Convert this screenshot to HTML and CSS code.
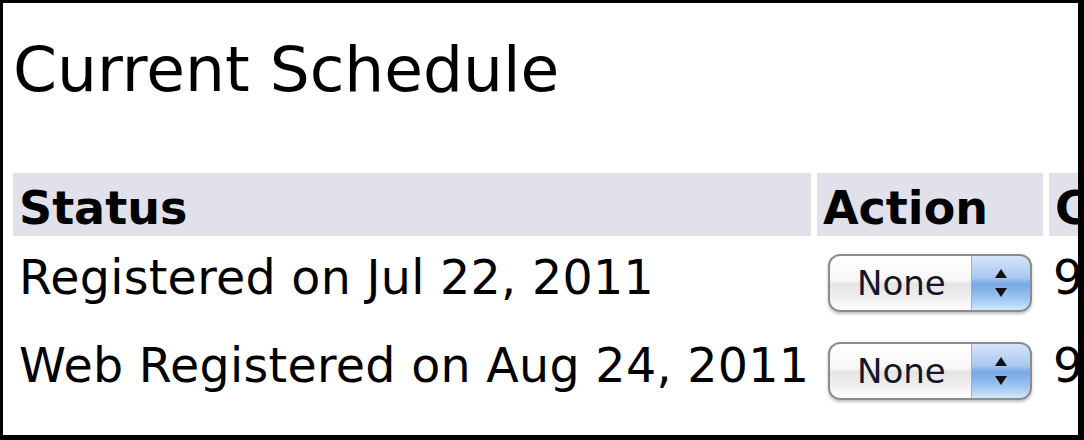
FILE: index.html
```html
<!DOCTYPE html>
<html lang="en">
<head>
<meta charset="utf-8">
<title>Current Schedule</title>
<link rel="stylesheet" href="styles.css">
</head>
<body>
<div class="frame">
  <h1 class="page-title">Current Schedule</h1>
  <table class="schedule">
    <thead>
      <tr>
        <th class="col-status">Status</th>
        <th class="col-action">Action</th>
        <th class="col-crn">CRN</th>
      </tr>
    </thead>
    <tbody>
      <tr>
        <td class="cell-text">Registered on Jul 22, 2011</td>
        <td class="cell-action">
          <span class="select">
            <span class="select-label">None</span>
            <span class="select-arrows"><span class="arrow-up"></span><span class="arrow-down"></span></span>
          </span>
        </td>
        <td class="cell-text cell-crn">90412</td>
      </tr>
      <tr>
        <td class="cell-text">Web Registered on Aug 24, 2011</td>
        <td class="cell-action">
          <span class="select">
            <span class="select-label">None</span>
            <span class="select-arrows"><span class="arrow-up"></span><span class="arrow-down"></span></span>
          </span>
        </td>
        <td class="cell-text cell-crn">90587</td>
      </tr>
    </tbody>
  </table>
</div>
</body>
</html>
```

FILE: styles.css
```css
html, body {
  margin: 0;
  padding: 0;
  background: #fff;
}

.frame {
  box-sizing: border-box;
  width: 1084px;
  height: 440px;
  border-style: solid;
  border-color: #000;
  border-width: 3px 6px 5px 3px;
  overflow: hidden;
  font-family: "DejaVu Sans", Verdana, sans-serif;
  color: #000;
}

.page-title {
  margin: 30px 0 0 10px;
  font-size: 63px;
  font-weight: normal;
  line-height: normal;
  white-space: nowrap;
}

.schedule {
  border-collapse: separate;
  border-spacing: 6px 4px;
  margin: 63px 0 0 4px;
  table-layout: fixed;
  width: 1300px;
}

.schedule th {
  background: #e1e1ec;
  text-align: left;
  font-size: 46px;
  font-weight: bold;
  line-height: 1.2;
  height: 63px;
  box-sizing: border-box;
  padding: 8px 6px 0;
  vertical-align: top;
  white-space: nowrap;
}

.col-status { width: 798px; }
.col-action { width: 226px; }

.schedule td {
  height: 84px;
  box-sizing: border-box;
  vertical-align: top;
  white-space: nowrap;
}

.cell-text {
  font-size: 47.5px;
  letter-spacing: 0.3px;
  line-height: 1.2;
  padding: 9px 6px 0;
}

.cell-crn {
  padding-left: 4px;
}

.cell-action {
  padding: 14px 0 0 11px;
}

/* Aqua-style popup button */
.select {
  box-sizing: border-box;
  display: flex;
  width: 204px;
  height: 58px;
  border: 2px solid #8c8c8c;
  border-radius: 12px;
  overflow: hidden;
  box-shadow: 0 2px 3px rgba(0, 0, 0, 0.25);
  background: linear-gradient(#ffffff 0%, #f6f6f6 45%, #e4e4e4 52%, #eeeeee 75%, #ffffff 100%);
}

.select-label {
  flex: 1;
  display: flex;
  align-items: center;
  padding-left: 27px;
  font-family: "DejaVu Sans", "Lucida Grande", sans-serif;
  font-size: 34px;
  line-height: 1;
  color: #14142a;
}

.select-arrows {
  width: 58px;
  display: flex;
  flex-direction: column;
  align-items: center;
  justify-content: center;
  gap: 10px;
  border-left: 1px solid #8fb2e0;
  margin: -2px -2px -2px 0;
  border-top: 2px solid #4e62b0;
  border-right: 2px solid #4e62b0;
  border-bottom: 2px solid #6d87c4;
  border-radius: 0 12px 12px 0;
  background: linear-gradient(#d6e5f8 0%, #a9c8ef 40%, #77a7e4 52%, #9cc4f0 78%, #d2e8fc 100%);
}

.arrow-up,
.arrow-down {
  width: 0;
  height: 0;
  border-left: 6px solid transparent;
  border-right: 6px solid transparent;
}

.arrow-up { border-bottom: 9px solid #111; }
.arrow-down { border-top: 9px solid #111; }
```
